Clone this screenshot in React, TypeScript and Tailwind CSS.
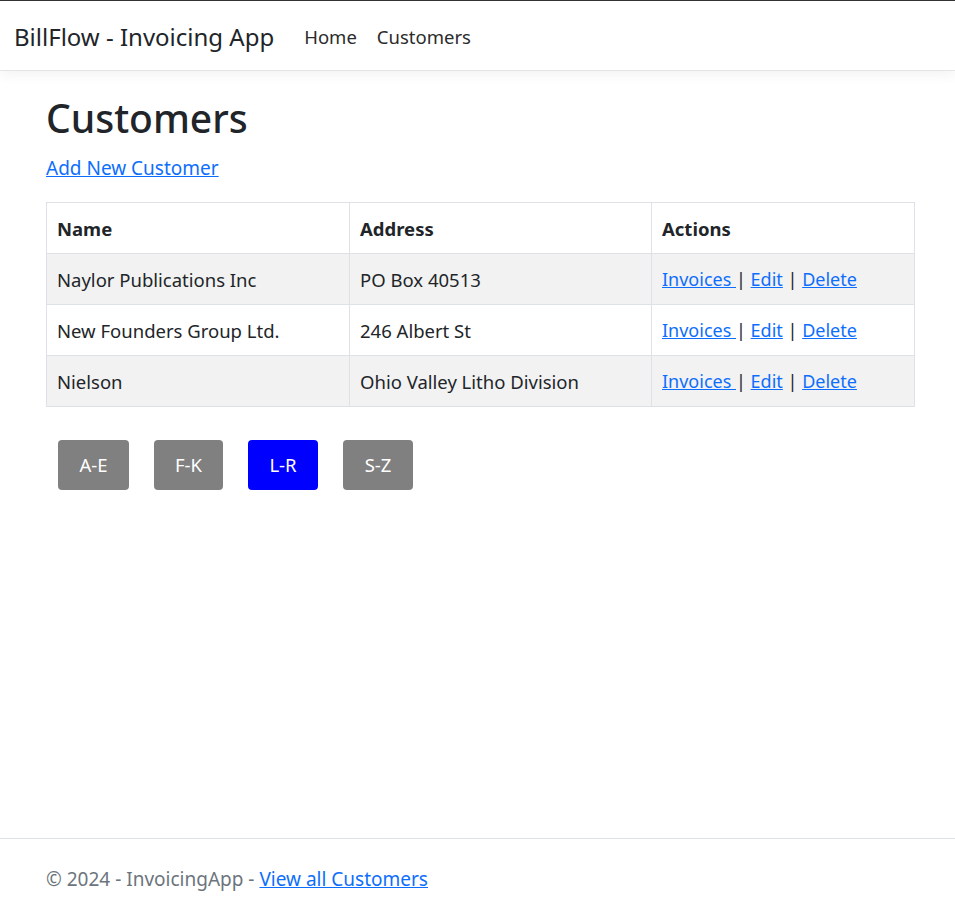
import React from 'react'

// Customers list page: navbar, striped table, letter-range pager, footer.

interface Customer {
  name: string
  address: string
}

const customers: Customer[] = [
  { name: 'Naylor Publications Inc', address: 'PO Box 40513' },
  { name: 'New Founders Group Ltd.', address: '246 Albert St' },
  { name: 'Nielson', address: 'Ohio Valley Litho Division' },
]

const ranges = [
  { label: 'A-E', w: 'w-[71px]', active: false },
  { label: 'F-K', w: 'w-[69px]', active: false },
  { label: 'L-R', w: 'w-[70px]', active: true },
  { label: 'S-Z', w: 'w-[70px]', active: false },
]

export default function App() {
  return (
    <div
      className="min-h-[907px] flex flex-col bg-white text-[#212529] border-t border-[#333]"
      style={{ fontFamily: '"Noto Sans", "Open Sans", sans-serif' }}
    >
      <nav className="h-[70px] flex items-center px-[14px] pt-[2px] border-b border-[#e5e5e5] shadow-[0_4px_12px_rgba(0,0,0,0.05)]">
        <span className="text-[24px] text-[#212529] mr-[30px]">BillFlow - Invoicing App</span>
        <a className="text-[18.5px] text-[#2b2b2b] mr-[20px]">Home</a>
        <a className="text-[18.5px] text-[#2b2b2b]">Customers</a>
      </nav>

      <main className="flex-1 px-[46px] pt-[24px]">
        <h1 className="text-[39px] font-medium leading-[1.2] mb-[12px]">Customers</h1>
        <a href="#" className="text-[19px] text-[#0d6efd] underline">Add New Customer</a>

        <table className="mt-[20px] w-[869px] border-collapse text-[18.5px]">
          <thead>
            <tr className="h-[51px]">
              <th className="w-[303px] border border-[#dee2e6] px-[10px] pt-[1px] text-left font-bold">Name</th>
              <th className="w-[302px] border border-[#dee2e6] px-[10px] pt-[1px] text-left font-bold">Address</th>
              <th className="border border-[#dee2e6] px-[10px] pt-[1px] text-left font-bold">Actions</th>
            </tr>
          </thead>
          <tbody>
            {customers.map((c, i) => (
              <tr key={c.name} className={i % 2 === 0 ? 'h-[51px] bg-[#f2f2f2]' : 'h-[51px] bg-white'}>
                <td className="border border-[#dee2e6] px-[10px] pt-[1px]">{c.name}</td>
                <td className="border border-[#dee2e6] px-[10px] pt-[1px]">{c.address}</td>
                <td className="border border-[#dee2e6] px-[10px] pt-[1px] text-[18px]">
                  <a href="#" className="text-[#0d6efd] underline">Invoices </a>|{' '}
                  <a href="#" className="text-[#0d6efd] underline">Edit</a> |{' '}
                  <a href="#" className="text-[#0d6efd] underline">Delete</a>
                </td>
              </tr>
            ))}
          </tbody>
        </table>

        <div className="flex gap-[25px] mt-[33px] pl-[12px]">
          {ranges.map((r) => (
            <button
              key={r.label}
              className={
                (r.active ? 'bg-[#0000ff] ' : 'bg-[#808080] ') +
                r.w +
                ' h-[50px] rounded-[4px] text-white text-[18.5px]'
              }
            >
              {r.label}
            </button>
          ))}
        </div>
      </main>

      <footer className="border-t border-[#dee2e6] h-[69px] flex items-start pt-[26px] px-[46px] text-[19px] text-[#6c757d]">
        <span>
          © 2024 - InvoicingApp - <a href="#" className="text-[#0d6efd] underline">View all Customers</a>
        </span>
      </footer>
    </div>
  )
}
